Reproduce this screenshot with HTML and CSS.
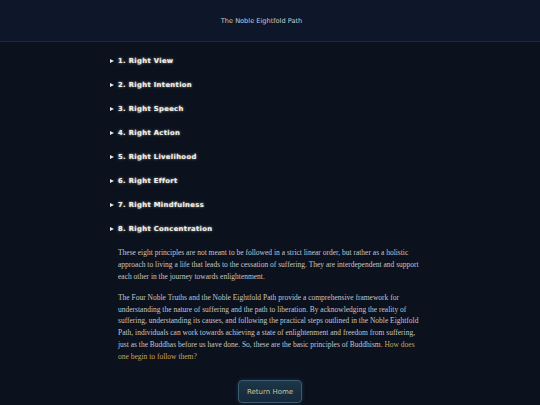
FILE: index.html
```html
<!DOCTYPE html>
<html lang="en">
<head>
<meta charset="utf-8">
<title>The Noble Eightfold Path</title>
<link rel="stylesheet" href="styles.css">
</head>
<body>
<header class="topbar">
  <h1 class="title">The Noble Eightfold Path</h1>
</header>
<main class="content">
  <div class="path-list">
    <details class="step"><summary>1. Right View</summary></details>
    <details class="step"><summary>2. Right Intention</summary></details>
    <details class="step"><summary>3. Right Speech</summary></details>
    <details class="step"><summary>4. Right Action</summary></details>
    <details class="step"><summary>5. Right Livelihood</summary></details>
    <details class="step"><summary>6. Right Effort</summary></details>
    <details class="step"><summary>7. Right Mindfulness</summary></details>
    <details class="step"><summary>8. Right Concentration</summary></details>
  </div>
  <p class="para first">These eight principles are not meant to be followed in a strict linear order, but rather as a holistic approach to living a life that leads to the cessation of suffering. They are interdependent and support each other in the journey towards enlightenment.</p>
  <p class="para second">The Four Noble Truths and the Noble Eightfold Path provide a comprehensive framework for understanding the nature of suffering and the path to liberation. By acknowledging the reality of suffering, understanding its causes, and following the practical steps outlined in the Noble Eightfold Path, individuals can work towards achieving a state of enlightenment and freedom from suffering, just as the Buddhas before us have done. So, these are the basic principles of Buddhism. <a class="ask" href="#">How does one begin to follow them?</a></p>
  <div class="actions">
    <button class="home-btn" type="button">Return Home</button>
  </div>
</main>
</body>
</html>
```
FILE: styles.css
```css
html, body {
  margin: 0;
  padding: 0;
}
body {
  background: #0b111d;
  font-family: "DejaVu Sans", sans-serif;
  height: 405px;
  overflow: hidden;
}
.topbar {
  height: 41px;
  background: #0e172a;
  border-bottom: 1px solid #1f2939;
  display: flex;
  align-items: center;
  justify-content: center;
  padding-right: 17px;
}
.title {
  margin: 0;
  font-size: 6.6px;
  font-weight: normal;
  color: #c9ccd2;
}
.content {
  width: 320px;
  margin: 0 auto;
}
.path-list {
  padding-top: 7px;
}
.step summary {
  height: 24px;
  line-height: 24px;
  list-style: none;
  display: flex;
  align-items: center;
  font-weight: bold;
  font-size: 6.8px;
  letter-spacing: 0.35px;
  color: #f1efe6;
  text-shadow: 0 0 3px rgba(255, 255, 240, 0.55), 0 0 1px rgba(255,255,255,0.4);
  cursor: pointer;
}
.step summary::-webkit-details-marker { display: none; }
.step summary::before {
  content: "";
  width: 0;
  height: 0;
  border-left: 4px solid #e8e6de;
  border-top: 2.5px solid transparent;
  border-bottom: 2.5px solid transparent;
  margin-right: 4px;
}
.para {
  font-family: "Liberation Serif", serif;
  font-size: 7.5px;
  color: #c3c6cc;
  margin: 0 4px 0 8px;
  padding: 0;
}
.para.first {
  line-height: 12px;
  margin-top: 6px;
}
.para.second {
  line-height: 11.7px;
  margin-top: 9px;
}
.ask {
  color: #caa35a;
  text-decoration: none;
}
.actions {
  display: flex;
  justify-content: center;
  margin-top: 18px;
}
.home-btn {
  width: 64px;
  height: 23px;
  border: 1px solid #3c5a70;
  border-radius: 4px;
  background: linear-gradient(#1d3649, #15293a);
  color: #cfc191;
  font-family: "DejaVu Sans", sans-serif;
  font-size: 7px;
  padding: 0;
  box-shadow: 0 0 4px rgba(60, 110, 150, 0.35);
}
```
